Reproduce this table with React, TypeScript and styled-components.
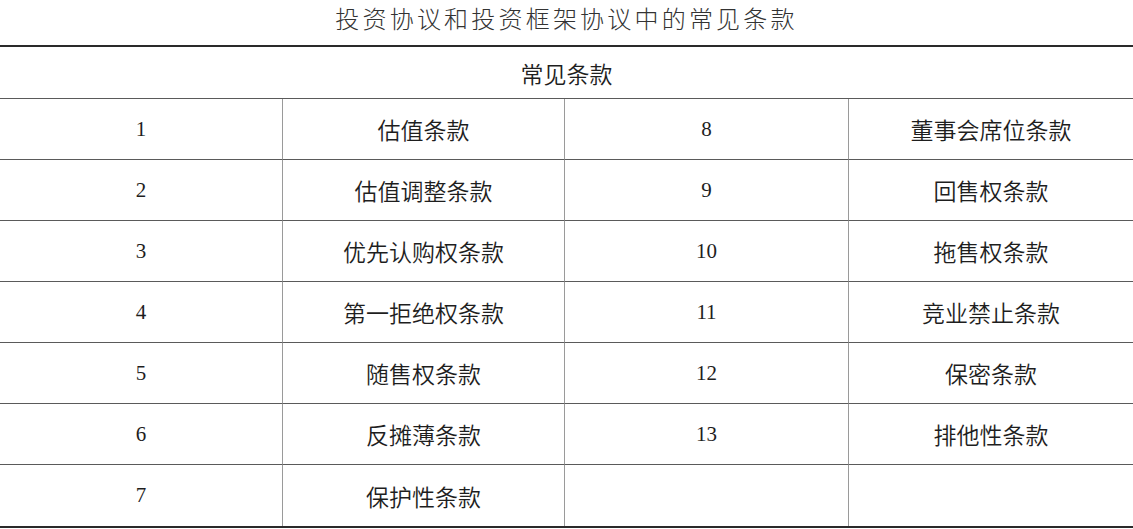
import styled, { createGlobalStyle } from "styled-components";

const GlobalStyle = createGlobalStyle`
  html, body {
    margin: 0;
    padding: 0;
    background: #ffffff;
  }
`;

const Page = styled.div`
  width: 1133px;
  height: 529px;
  background: #ffffff;
  color: #1e1e1e;
  overflow: hidden;
`;

const Title = styled.h1`
  margin: 0;
  height: 45px;
  padding-top: 2px;
  box-sizing: border-box;
  line-height: 32px;
  text-align: center;
  font-family: "Noto Sans CJK SC", sans-serif;
  font-weight: 300;
  font-size: 24px;
  letter-spacing: 3.2px;
  color: #333333;
`;

const Table = styled.div`
  border-top: 2px solid #2a2a2a;
  border-bottom: 2px solid #2a2a2a;
`;

const Header = styled.div`
  height: 51px;
  display: flex;
  align-items: center;
  justify-content: center;
  border-bottom: 1px solid #5a5a5a;
  font-family: "Noto Sans CJK SC", sans-serif;
  font-weight: 350;
  font-size: 23px;
  color: #1e1e1e;
`;

const Grid = styled.div`
  display: grid;
  grid-template-columns: 282px 282px 284px 285px;
  grid-auto-rows: 61px;
`;

interface ICell {
  $num?: boolean;
  $first?: boolean;
  $last?: boolean;
}

const Cell = styled.div<ICell>`
  display: flex;
  align-items: center;
  justify-content: center;
  border-left: ${(props) => (props.$first ? "none" : "1px solid #9a9a9a")};
  border-bottom: ${(props) => (props.$last ? "none" : "1px solid #5a5a5a")};
  font-family: ${(props) =>
    props.$num
      ? `"Liberation Serif", "Times New Roman", serif`
      : `"Noto Sans CJK SC", sans-serif`};
  font-weight: ${(props) => (props.$num ? 400 : 350)};
  font-size: ${(props) => (props.$num ? "21px" : "23px")};
  color: #1e1e1e;
`;

const left = [
  "估值条款",
  "估值调整条款",
  "优先认购权条款",
  "第一拒绝权条款",
  "随售权条款",
  "反摊薄条款",
  "保护性条款",
];

const right = [
  "董事会席位条款",
  "回售权条款",
  "拖售权条款",
  "竞业禁止条款",
  "保密条款",
  "排他性条款",
];

function App() {
  return (
    <>
      <GlobalStyle />
      <Page>
        <Title>投资协议和投资框架协议中的常见条款</Title>
        <Table>
          <Header>常见条款</Header>
          <Grid>
            {left.map((item, i) => {
              const last = i === left.length - 1;
              return [
                <Cell key={`a${i}`} $num $first $last={last}>
                  {i + 1}
                </Cell>,
                <Cell key={`b${i}`} $last={last}>
                  {item}
                </Cell>,
                <Cell key={`c${i}`} $num $last={last}>
                  {right[i] ? i + 8 : ""}
                </Cell>,
                <Cell key={`d${i}`} $last={last}>
                  {right[i] ?? ""}
                </Cell>,
              ];
            })}
          </Grid>
        </Table>
      </Page>
    </>
  );
}

export default App;
